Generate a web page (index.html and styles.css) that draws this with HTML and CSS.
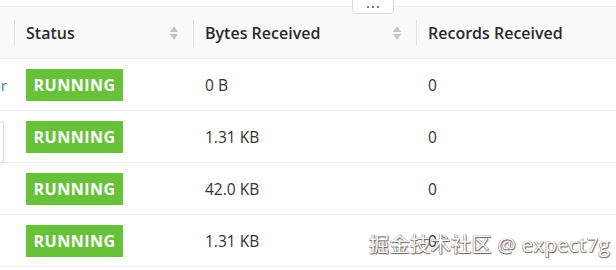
FILE: index.html
```html
<!DOCTYPE html>
<html>
<head>
<meta charset="utf-8">
<link rel="stylesheet" href="styles.css">
</head>
<body>
<div class="page">
  <div class="more-tab"><span></span><span></span><span></span></div>
  <div class="table">
    <div class="row head">
      <div class="cell c0"></div>
      <div class="cell sep">Status<span class="sort"><i class="up"></i><i class="down"></i></span></div>
      <div class="cell sep">Bytes Received<span class="sort"><i class="up"></i><i class="down"></i></span></div>
      <div class="cell sep">Records Received</div>
    </div>
    <div class="row">
      <div class="cell c0"><span class="link">Monitor</span></div>
      <div class="cell"><span class="badge">RUNNING</span></div>
      <div class="cell">0 B</div>
      <div class="cell">0</div>
    </div>
    <div class="row">
      <div class="cell c0"></div>
      <div class="cell"><span class="badge">RUNNING</span></div>
      <div class="cell">1.31 KB</div>
      <div class="cell">0</div>
    </div>
    <div class="row">
      <div class="cell c0"></div>
      <div class="cell"><span class="badge">RUNNING</span></div>
      <div class="cell">42.0 KB</div>
      <div class="cell">0</div>
    </div>
    <div class="row">
      <div class="cell c0"></div>
      <div class="cell"><span class="badge">RUNNING</span></div>
      <div class="cell">1.31 KB</div>
      <div class="cell">0</div>
    </div>
  </div>
  <div class="popover-edge"></div>
  <div class="watermark">掘金技术社区 @ expect7g</div>
</div>
</body>
</html>
```
FILE: styles.css
```css
html, body {
  margin: 0;
  padding: 0;
  background: #fff;
}
body {
  font-family: "Open Sans", "Noto Sans", sans-serif;
  color: #333;
  overflow: hidden;
}
.page {
  position: relative;
  width: 616px;
  height: 270px;
  padding-top: 6px;
  box-sizing: border-box;
}
.table {
  border-top: 1px solid #ececec;
}
.row {
  display: grid;
  grid-template-columns: 14px 179px 223px 1fr;
  height: 51px;
  border-bottom: 1px solid #ececec;
}
.row.head {
  background: #fafafa;
  font-weight: 600;
  color: #2b2b2b;
}
.cell {
  display: flex;
  align-items: center;
  padding-left: 12px;
  font-size: 15.5px;
  color: #333;
  position: relative;
}
.head .cell {
  font-size: 16px;
  color: #2b2b2b;
}
.cell.c0 {
  padding-left: 0;
  padding-right: 7px;
  justify-content: flex-end;
  overflow: hidden;
}
.link {
  color: #3b7be0;
  white-space: nowrap;
  font-size: 15px;
}
.cell.sep::before {
  content: "";
  position: absolute;
  left: 0;
  top: 13px;
  width: 1px;
  height: 26px;
  background: #e4e4e4;
}
.sort {
  margin-left: auto;
  margin-right: 15px;
  display: flex;
  flex-direction: column;
  gap: 2px;
}
.sort i {
  display: block;
  width: 0;
  height: 0;
  border-left: 4px solid transparent;
  border-right: 4px solid transparent;
}
.sort .up {
  border-bottom: 6px solid #c4c4c4;
}
.sort .down {
  border-top: 6px solid #c4c4c4;
}
.badge {
  display: inline-flex;
  align-items: center;
  justify-content: center;
  width: 97px;
  height: 32px;
  background: #67c23a;
  color: #fff;
  font-weight: 700;
  font-size: 16px;
  letter-spacing: 0.5px;
}
.more-tab {
  position: absolute;
  left: 352px;
  top: -1px;
  width: 40px;
  height: 13px;
  background: #fff;
  border: 1px solid #dedede;
  border-radius: 0 0 4px 4px;
  display: flex;
  justify-content: center;
  align-items: center;
  gap: 3px;
  z-index: 2;
}
.more-tab span {
  width: 2px;
  height: 2px;
  background: #555;
  border-radius: 1px;
}
.popover-edge {
  position: absolute;
  left: -6px;
  top: 121px;
  width: 8px;
  height: 40px;
  background: #fff;
  border: 1px solid #dcdcdc;
  border-radius: 3px;
  box-shadow: 0 2px 6px rgba(0,0,0,0.08);
}
.watermark {
  position: absolute;
  right: 6px;
  top: 229px;
  font-family: "Open Sans", "Noto Sans CJK SC", sans-serif;
  font-size: 20px;
  font-weight: 400;
  letter-spacing: 0.5px;
  color: #fff;
  white-space: nowrap;
  text-shadow: 1px 1px 1px #6a6a6a, -0.5px -0.5px 0 #9a9a9a, 0.5px -0.5px 0 #9a9a9a, -0.5px 0.5px 0 #9a9a9a;
}
```
